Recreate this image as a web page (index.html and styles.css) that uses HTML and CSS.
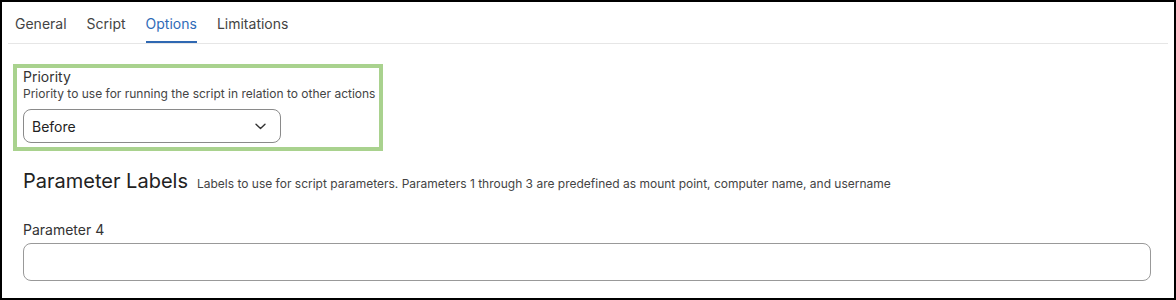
FILE: index.html
```html
<!DOCTYPE html>
<html lang="en">

<head>
    <meta charset="UTF-8">
    <meta name="viewport" content="width=device-width, initial-scale=1.0">
    <title>Options</title>
    <link rel="stylesheet" href="styles.css">
</head>

<body>
    <div class="frame">
        <ul class="tabs">
            <li>General</li>
            <li>Script</li>
            <li class="active">Options</li>
            <li>Limitations</li>
        </ul>
        <div class="content">
            <div class="field highlight">
                <div class="label">Priority</div>
                <div class="hint">Priority to use for running the script in relation to other actions</div>
                <div class="select">
                    <span>Before</span>
                    <svg class="chevron" width="11" height="7" viewBox="0 0 11 7">
                        <path d="M1 1.2 L5.5 5.5 L10 1.2" fill="none" stroke="#333" stroke-width="1.4" stroke-linecap="round" stroke-linejoin="round" />
                    </svg>
                </div>
            </div>
            <div class="section">
                <h2>Parameter Labels</h2>
                <span class="hint">Labels to use for script parameters. Parameters 1 through 3 are predefined as mount point, computer name, and username</span>
            </div>
            <div class="field">
                <div class="label">Parameter 4</div>
                <div class="input"></div>
            </div>
        </div>
    </div>
</body>

</html>
```

FILE: styles.css
```css
* {
    padding: 0px;
    margin: 0px;
    list-style: none;
    box-sizing: border-box;
}

body {
    font-family: Inter, "Liberation Sans", sans-serif;
    color: #222;
    background: #fff;
}

.frame {
    width: 1176px;
    height: 300px;
    border: 2px solid #000;
    overflow: hidden;
}

.tabs {
    display: flex;
    gap: 20px;
    margin: 0 6px;
    padding-left: 7px;
    border-bottom: 1px solid #e6e6e6;
}

.tabs li {
    padding-top: 13px;
    padding-bottom: 9px;
    font-size: 14px;
    line-height: 17px;
    color: #444;
    border-bottom: 2px solid transparent;
}

.tabs .active {
    color: #2f6bb8;
    border-bottom-color: #2f68b2;
}

.content {
    padding: 0 23px 0 21px;
}

.field .label {
    font-size: 14px;
    line-height: 18px;
    color: #333;
}

.hint {
    font-size: 12px;
    line-height: 16px;
    color: #444;
    white-space: nowrap;
}

.highlight {
    width: 370px;
    margin-top: 20px;
    margin-left: -10px;
    padding: 0 2px 4px 6px;
    border: 4px solid #a9d28e;
}

.select {
    display: flex;
    align-items: center;
    justify-content: space-between;
    width: 258px;
    height: 34px;
    margin-top: 7px;
    padding: 0 14px 0 8px;
    border: 1px solid #8a8a8a;
    border-radius: 8px;
    font-size: 14px;
}

.section {
    display: flex;
    align-items: baseline;
    gap: 9px;
    margin-top: 18px;
}

.section h2 {
    font-size: 20px;
    line-height: 24px;
    font-weight: 400;
    color: #222;
}

.section + .field {
    margin-top: 28px;
}

.input {
    height: 38px;
    margin-top: 4px;
    border: 1px solid #999;
    border-radius: 8px;
}
```
